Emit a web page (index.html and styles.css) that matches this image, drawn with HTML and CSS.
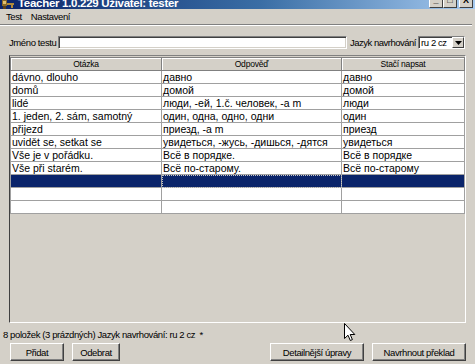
FILE: index.html
```html
<!DOCTYPE html>
<html lang="cs">

<head>
  <meta charset="UTF-8">
  <meta name="viewport" content="width=device-width, initial-scale=1.0">
  <title>Teacher 1.0.229</title>

  <link rel="stylesheet" href="styles.css">
</head>

<body>
  <div class="window">
    <div class="titlebar">
      <svg class="appicon" width="14" height="9" viewBox="0 0 14 9">
        <rect x="1" y="0" width="5" height="6" fill="#8a6a2a" />
        <rect x="2" y="1" width="3" height="3" fill="#e0c070" />
        <rect x="6" y="3" width="7" height="2" fill="#b08a3a" />
        <rect x="10" y="5" width="2" height="3" fill="#b08a3a" />
        <rect x="2" y="6" width="3" height="3" fill="#5a4018" />
      </svg>
      <span class="title">Teacher 1.0.229 Uživatel: tester</span>
      <div class="winbtns">
        <span class="wbtn">_</span>
        <span class="wbtn">□</span>
        <span class="wbtn close">X</span>
      </div>
    </div>

    <div class="menubar">
      <span>Test</span>
      <span>Nastavení</span>
    </div>
    <div class="menusep"></div>

    <div class="namerow">
      <label class="namelabel" for="jmeno">Jméno testu</label>
      <input class="nameinput" type="text" id="jmeno" name="jmeno">
      <span class="langlabel">Jazyk navrhování</span>
      <div class="combo">
        <span class="combotext">ru 2 cz</span>
        <span class="combobtn">
          <svg width="7" height="4" viewBox="0 0 7 4"><path d="M0 0h7L3.5 4z" fill="#000" /></svg>
        </span>
      </div>
    </div>

    <div class="gridframe">
      <table class="grid">
        <colgroup>
          <col class="c1">
          <col class="c2">
          <col class="c3">
        </colgroup>
        <tr>
          <th>Otázka</th>
          <th>Odpověď</th>
          <th>Stačí napsat</th>
        </tr>
        <tr>
          <td>dávno, dlouho</td>
          <td>давно</td>
          <td>давно</td>
        </tr>
        <tr>
          <td>domů</td>
          <td>домой</td>
          <td>домой</td>
        </tr>
        <tr>
          <td>lidé</td>
          <td>люди, -ей, 1.č. человек, -а m</td>
          <td>люди</td>
        </tr>
        <tr>
          <td>1. jeden, 2. sám, samotný</td>
          <td>один, одна, одно, одни</td>
          <td>один</td>
        </tr>
        <tr>
          <td>přijezd</td>
          <td>приезд, -а m</td>
          <td>приезд</td>
        </tr>
        <tr>
          <td>uvidět se, setkat se</td>
          <td>увидеться, -жусь, -дишься, -дятся</td>
          <td>увидеться</td>
        </tr>
        <tr>
          <td>Vše je v pořádku.</td>
          <td>Всё в порядке.</td>
          <td>Всё в порядке</td>
        </tr>
        <tr>
          <td>Vše při starém.</td>
          <td>Всё по-старому.</td>
          <td>Всё по-старому</td>
        </tr>
        <tr class="selected">
          <td>&nbsp;</td>
          <td class="focus">&nbsp;</td>
          <td>&nbsp;</td>
        </tr>
        <tr>
          <td>&nbsp;</td>
          <td>&nbsp;</td>
          <td>&nbsp;</td>
        </tr>
        <tr>
          <td>&nbsp;</td>
          <td>&nbsp;</td>
          <td>&nbsp;</td>
        </tr>
      </table>
    </div>

    <div class="status">8 položek (3 prázdných) Jazyk navrhování: ru 2 cz &nbsp;*</div>

    <div class="buttons">
      <button class="btn b-pridat">Přidat</button>
      <button class="btn b-odebrat">Odebrat</button>
      <button class="btn b-wide b-detail">Detailnější úpravy</button>
      <button class="btn b-wide">Navrhnout překlad</button>
    </div>

    <svg class="cursor" width="12" height="19" viewBox="0 0 12 19">
      <path d="M0.5 0.5V15.5L4 12.2L6.3 17.5L8.4 16.6L6.2 11.5H10.8Z" fill="#fff" stroke="#000" stroke-width="1" stroke-linejoin="miter" />
    </svg>
  </div>
</body>

</html>
```

FILE: styles.css
```css
* {
  padding: 0;
  margin: 0;
  box-sizing: border-box;
}

body {
  background: #d4d0c8;
  font-family: "Liberation Sans", sans-serif;
  font-size: 9.5px;
  letter-spacing: -0.4px;
  color: #000;
}

.window {
  position: relative;
  width: 475px;
  height: 364px;
  overflow: hidden;
  display: flex;
  flex-direction: column;
}

/* title bar, cut off at the top */
.titlebar {
  flex: none;
  height: 9px;
  display: flex;
  align-items: flex-end;
  overflow: hidden;
  background: linear-gradient(to right, #0a246a 0%, #3a6ea5 55%, #a6caf0 100%);
}

.appicon {
  flex: none;
  margin: 0 3px 0 1px;
  align-self: flex-start;
}

.title {
  color: #fff;
  font-weight: bold;
  font-size: 11.5px;
  letter-spacing: -0.3px;
  line-height: 11px;
  white-space: nowrap;
}

.winbtns {
  display: flex;
  margin-left: auto;
  margin-right: 2px;
  margin-bottom: 1px;
}

.wbtn {
  width: 14px;
  height: 14px;
  background: #d4d0c8;
  border: 1px solid;
  border-color: #fff #404040 #404040 #fff;
  font-size: 9px;
  font-weight: bold;
  letter-spacing: 0;
  line-height: 11px;
  text-align: center;
}

.wbtn.close {
  margin-left: 2px;
}

/* menu */
.menubar {
  flex: none;
  height: 15px;
  display: flex;
  align-items: center;
  gap: 9px;
  padding-left: 6px;
}

.menusep {
  flex: none;
  margin-right: 3px;
  border-top: 1px solid #808080;
  border-bottom: 1px solid #fff;
}

/* name row */
.namerow {
  flex: none;
  display: flex;
  align-items: center;
  height: 13px;
  margin-top: 10px;
  padding-left: 9px;
}

.namelabel {
  width: 49px;
  white-space: nowrap;
}

.nameinput {
  width: 289px;
  height: 13px;
  background: #fff;
  border: 1px solid;
  border-color: #808080 #fff #fff #808080;
  box-shadow: inset 1px 1px #404040, inset -1px -1px #d4d0c8;
  outline: none;
}

.langlabel {
  width: 71px;
  padding-left: 3px;
  white-space: nowrap;
  letter-spacing: -0.5px;
}

.combo {
  width: 47px;
  height: 13px;
  display: flex;
  background: #fff;
  border: 1px solid;
  border-color: #808080 #fff #fff #808080;
  box-shadow: inset 1px 1px #404040;
}

.combotext {
  flex: 1;
  padding: 0 0 0 2px;
  line-height: 11px;
  white-space: nowrap;
}

.combobtn {
  width: 12px;
  display: flex;
  align-items: center;
  justify-content: center;
  background: #d4d0c8;
  border: 1px solid;
  border-color: #fff #404040 #404040 #fff;
}

/* grid */
.gridframe {
  flex: none;
  height: 268px;
  margin: 6px 9px 0 9px;
  border: 1px solid;
  border-color: #808080 #fff #fff #404040;
}

.grid {
  width: 454px;
  margin-top: 1px;
  border-collapse: collapse;
  table-layout: fixed;
  background: #fff;
}

.c1 {
  width: 151px;
}

.c2 {
  width: 180px;
}

.c3 {
  width: 123px;
}

.grid th,
.grid td {
  height: 12px;
  padding: 0 1px;
  line-height: 12px;
  border: 1px solid #a0a0a0;
  white-space: nowrap;
  overflow: hidden;
  text-align: left;
}

.grid td {
  font-size: 10.5px;
  letter-spacing: 0;
}

.grid th {
  background: #d4d0c8;
  font-weight: normal;
  font-size: 8.5px;
  letter-spacing: -0.2px;
  text-align: center;
  border-color: #808080;
  box-shadow: inset 1px 1px #fff;
}

.grid tr.selected td {
  background: #0a246a;
}

.grid td.focus {
  outline: 1px dotted #c8c8c8;
  outline-offset: -1px;
}

/* status and buttons */
.status {
  flex: none;
  height: 19px;
  padding: 5px 0 0 3px;
  line-height: 14px;
  white-space: nowrap;
}

.buttons {
  flex: none;
  display: flex;
  height: 18px;
  margin-top: 1px;
  padding: 0 9px 0 10px;
  gap: 8px;
}

.btn {
  height: 18px;
  background: #d4d0c8;
  font-family: inherit;
  font-size: 9.5px;
  letter-spacing: -0.4px;
  color: #000;
  border: 1px solid;
  border-color: #fff #404040 #404040 #fff;
  box-shadow: inset -1px -1px #808080;
}

.b-pridat {
  width: 54px;
}

.b-odebrat {
  width: 48px;
}

.b-wide {
  width: 94px;
}

.b-detail {
  margin-left: auto;
}

.cursor {
  position: absolute;
  left: 344px;
  top: 323px;
}
```
